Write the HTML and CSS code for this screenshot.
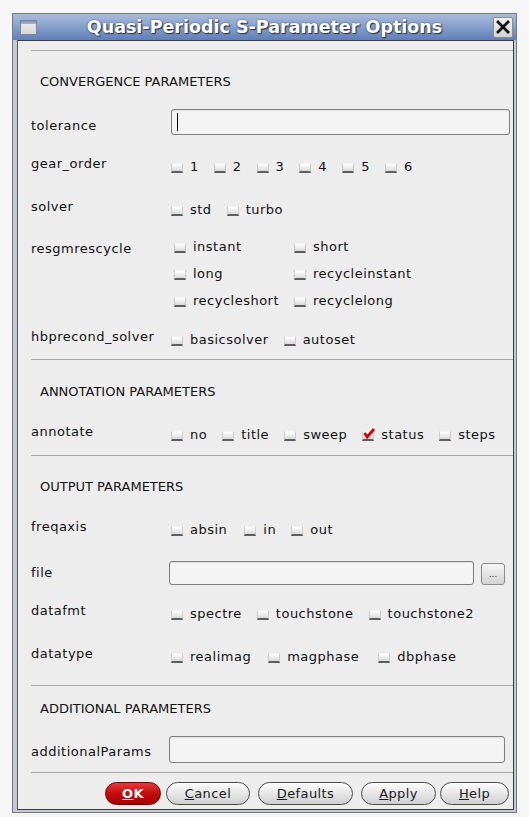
FILE: index.html
```html
<!DOCTYPE html>
<html>
<head>
<meta charset="utf-8">
<title>Quasi-Periodic S-Parameter Options</title>
<link rel="stylesheet" href="styles.css">
</head>
<body>
<div class="window">
  <div class="titlebar">
    <span class="winicon"><span class="winicon-bar"></span></span>
    <span class="title">Quasi-Periodic S-Parameter Options</span>
    <span class="close"><svg width="14" height="14" viewBox="0 0 14 14"><path d="M2 2 L12 12 M12 2 L2 12" stroke="#111" stroke-width="2.8" stroke-linecap="square"/></svg></span>
  </div>
  <div class="body">
    <div class="sep first"></div>
    <div class="head">CONVERGENCE PARAMETERS</div>

    <div class="row r-tol">
      <div class="label lab-mid">tolerance</div>
      <div class="field tol"><span class="caret"></span></div>
    </div>

    <div class="row r-gear">
      <div class="label">gear_order</div>
      <div class="opts">
        <span class="opt"><span class="cb"></span>1</span>
        <span class="opt"><span class="cb"></span>2</span>
        <span class="opt"><span class="cb"></span>3</span>
        <span class="opt"><span class="cb"></span>4</span>
        <span class="opt"><span class="cb"></span>5</span>
        <span class="opt"><span class="cb"></span>6</span>
      </div>
    </div>

    <div class="row r-solver">
      <div class="label">solver</div>
      <div class="opts">
        <span class="opt"><span class="cb"></span>std</span>
        <span class="opt"><span class="cb"></span>turbo</span>
      </div>
    </div>

    <div class="row r-resg">
      <div class="label">resgmrescycle</div>
      <div class="opts grid2">
        <span class="opt"><span class="cb"></span>instant</span>
        <span class="opt"><span class="cb"></span>short</span>
        <span class="opt"><span class="cb"></span>long</span>
        <span class="opt"><span class="cb"></span>recycleinstant</span>
        <span class="opt"><span class="cb"></span>recycleshort</span>
        <span class="opt"><span class="cb"></span>recyclelong</span>
      </div>
    </div>

    <div class="row r-hb">
      <div class="label">hbprecond_solver</div>
      <div class="opts">
        <span class="opt"><span class="cb"></span>basicsolver</span>
        <span class="opt"><span class="cb"></span>autoset</span>
      </div>
    </div>

    <div class="sep"></div>
    <div class="head h-ann">ANNOTATION PARAMETERS</div>

    <div class="row r-ann">
      <div class="label">annotate</div>
      <div class="opts">
        <span class="opt"><span class="cb"></span>no</span>
        <span class="opt"><span class="cb"></span>title</span>
        <span class="opt"><span class="cb"></span>sweep</span>
        <span class="opt"><span class="cb checked"><svg width="14" height="13" viewBox="0 0 14 13"><path d="M2.5 6 L5.2 10 L12 2" fill="none" stroke="#d40000" stroke-width="2.8" stroke-linejoin="miter"/></svg></span>status</span>
        <span class="opt"><span class="cb"></span>steps</span>
      </div>
    </div>

    <div class="sep"></div>
    <div class="head h-out">OUTPUT PARAMETERS</div>

    <div class="row r-freq">
      <div class="label">freqaxis</div>
      <div class="opts">
        <span class="opt opt-wide"><span class="cb"></span>absin</span>
        <span class="opt"><span class="cb"></span>in</span>
        <span class="opt"><span class="cb"></span>out</span>
      </div>
    </div>

    <div class="row r-file">
      <div class="label lab-mid">file</div>
      <div class="filewrap">
        <div class="field file"></div>
        <div class="browse">...</div>
      </div>
    </div>

    <div class="row r-fmt">
      <div class="label">datafmt</div>
      <div class="opts">
        <span class="opt"><span class="cb"></span>spectre</span>
        <span class="opt"><span class="cb"></span>touchstone</span>
        <span class="opt"><span class="cb"></span>touchstone2</span>
      </div>
    </div>

    <div class="row r-type">
      <div class="label">datatype</div>
      <div class="opts">
        <span class="opt opt-wide"><span class="cb"></span>realimag</span>
        <span class="opt opt-wider"><span class="cb"></span>magphase</span>
        <span class="opt"><span class="cb"></span>dbphase</span>
      </div>
    </div>

    <div class="sep"></div>
    <div class="head h-add">ADDITIONAL PARAMETERS</div>

    <div class="row r-add">
      <div class="label lab-low">additionalParams</div>
      <div class="field add"></div>
    </div>

    <div class="sep"></div>
    <div class="buttons">
      <span class="btn b-ok"><u>O</u>K</span>
      <span class="btn b-cancel"><u>C</u>ancel</span>
      <span class="btn b-defaults"><u>D</u>efaults</span>
      <span class="btn b-apply"><u>A</u>pply</span>
      <span class="btn b-help"><u>H</u>elp</span>
    </div>
  </div>
</div>
</body>
</html>
```

FILE: styles.css
```css
html, body {
  margin: 0;
  padding: 0;
}

body {
  background: #f6f6f6;
  font-family: "DejaVu Sans", "Liberation Sans", sans-serif;
  font-size: 13px;
  color: #111;
}

.window {
  margin: 13px 0 0 12px;
  width: 503px;
  border: 1px solid #7a7a7a;
  background: #c3c9d3;
  padding-bottom: 2px;
}

.titlebar {
  height: 26px;
  display: grid;
  grid-template-columns: 1fr auto 1fr;
  align-items: center;
  background: linear-gradient(#aabcdc, #8aa2cc 45%, #5f7fb9);
}

.winicon {
  justify-self: start;
  margin-left: 7px;
  width: 17px;
  height: 15px;
  box-sizing: border-box;
  border: 1px solid #7d879a;
  background: linear-gradient(#eeeeee, #d6d6d6);
  display: flex;
  flex-direction: column;
}

.winicon-bar {
  height: 3px;
  background: linear-gradient(#7f93b8, #a9b7cf);
}

.title {
  font-weight: bold;
  font-size: 17.5px;
  color: #ffffff;
  text-shadow: 1px 1px 1px #26314a, 0 0 2px #3d4c6e;
  white-space: nowrap;
  line-height: 20px;
}

.close {
  justify-self: end;
  margin-right: 3px;
  width: 20px;
  height: 21px;
  box-sizing: border-box;
  border: 1px solid #8c8c8c;
  border-radius: 2px;
  background: linear-gradient(#f2f2f2, #d2d2d2);
  display: flex;
  align-items: center;
  justify-content: center;
}

.body {
  margin: 0 2px 0 4px;
  border: 1px solid #3c3c3c;
  border-left-color: #5a5a5a;
  background: #ededed;
  padding-left: 13px;
}

.sep {
  height: 0;
  border-top: 1px solid #a8a8a8;
}

.sep.first {
  margin-top: 9px;
}

.head {
  height: 53px;
  box-sizing: border-box;
  padding: 23px 0 0 9px;
  line-height: 16px;
  color: #111;
}

.h-ann {
  padding-top: 24px;
}

.h-out {
  height: 52px;
}

.h-add {
  height: 42px;
  padding-top: 15px;
}

.row {
  display: grid;
  grid-template-columns: 140px 1fr;
  align-items: start;
  box-sizing: border-box;
}

.label {
  padding-top: 11px;
  line-height: 16px;
  letter-spacing: 0.5px;
  white-space: nowrap;
}

.lab-mid {
  padding-top: 14px;
}

.lab-low {
  padding-top: 16px;
}

.r-tol { height: 41px; }
.r-gear { height: 43px; }
.r-solver { height: 42px; }
.r-resg { height: 88px; }
.r-hb { height: 41px; }
.r-ann { height: 42px; }
.r-freq { height: 43px; }
.r-file { height: 41px; }
.r-fmt { height: 43px; }
.r-type { height: 50px; }
.r-add { height: 44px; }

.opts {
  padding-top: 14px;
  display: flex;
  line-height: 16px;
  letter-spacing: 0.5px;
  white-space: nowrap;
}

.opts.grid2 {
  display: grid;
  grid-template-columns: 120px 120px;
  row-gap: 11px;
  padding-top: 9px;
  padding-left: 3px;
}

.opt {
  display: flex;
  align-items: center;
  margin-right: 15px;
}

.opt-wide {
  margin-right: 17px;
}

.opt-wider {
  margin-right: 19px;
}

.cb {
  position: relative;
  width: 12px;
  height: 10px;
  box-sizing: border-box;
  margin-right: 7px;
  margin-top: 1px;
  background: linear-gradient(#ffffff, #dadada);
  border: 1px solid #cdcdcd;
  border-top-color: #f3f3f3;
  border-bottom: 2px solid #5e5e5e;
  flex: none;
}

.cb.checked svg {
  position: absolute;
  left: -1px;
  top: -5px;
}

.field {
  box-sizing: border-box;
  border: 1px solid #7f7f7f;
  border-radius: 3px;
  background: #f4f4f4;
  box-shadow: inset 0 1px 1px rgba(0, 0, 0, 0.08);
}

.field.tol {
  height: 26px;
  margin-top: 5px;
  margin-right: 3px;
  display: flex;
  align-items: flex-start;
}

.caret {
  width: 1px;
  height: 18px;
  margin: 3px 0 0 5px;
  background: #000;
}

.filewrap {
  display: flex;
  margin-left: -2px;
  margin-right: 8px;
  align-items: flex-start;
}

.field.file {
  flex: 1;
  height: 24px;
  margin-top: 10px;
}

.browse {
  width: 24px;
  height: 22px;
  margin: 12px 0 0 7px;
  box-sizing: border-box;
  border: 1px solid #8a8a8a;
  border-radius: 3px;
  background: linear-gradient(#f7f7f7, #d3d3d3);
  font-size: 9px;
  line-height: 20px;
  text-align: center;
  color: #333;
}

.field.add {
  height: 27px;
  margin: 8px 8px 0 -2px;
}

.buttons {
  height: 36px;
  box-sizing: border-box;
  padding: 9px 4px 0 0;
  display: flex;
  justify-content: flex-end;
  align-items: flex-start;
}

.btn {
  height: 23px;
  box-sizing: border-box;
  border: 1px solid #4a4a4a;
  border-radius: 12px;
  background: linear-gradient(#fdfdfd, #e6e6e6 50%, #cfcfcf);
  display: flex;
  align-items: center;
  justify-content: center;
  letter-spacing: 0.4px;
  color: #1a1a1a;
}

.b-ok {
  width: 56px;
  border-color: #6e0000;
  background: linear-gradient(#e23c3c, #c40d0d 50%, #a60000);
  color: #ffffff;
  font-weight: bold;
}

.b-cancel {
  width: 84px;
  margin-left: 5px;
}

.b-defaults {
  width: 95px;
  margin-left: 8px;
}

.b-apply {
  width: 75px;
  margin-left: 8px;
}

.b-help {
  width: 69px;
  margin-left: 4px;
}
```
